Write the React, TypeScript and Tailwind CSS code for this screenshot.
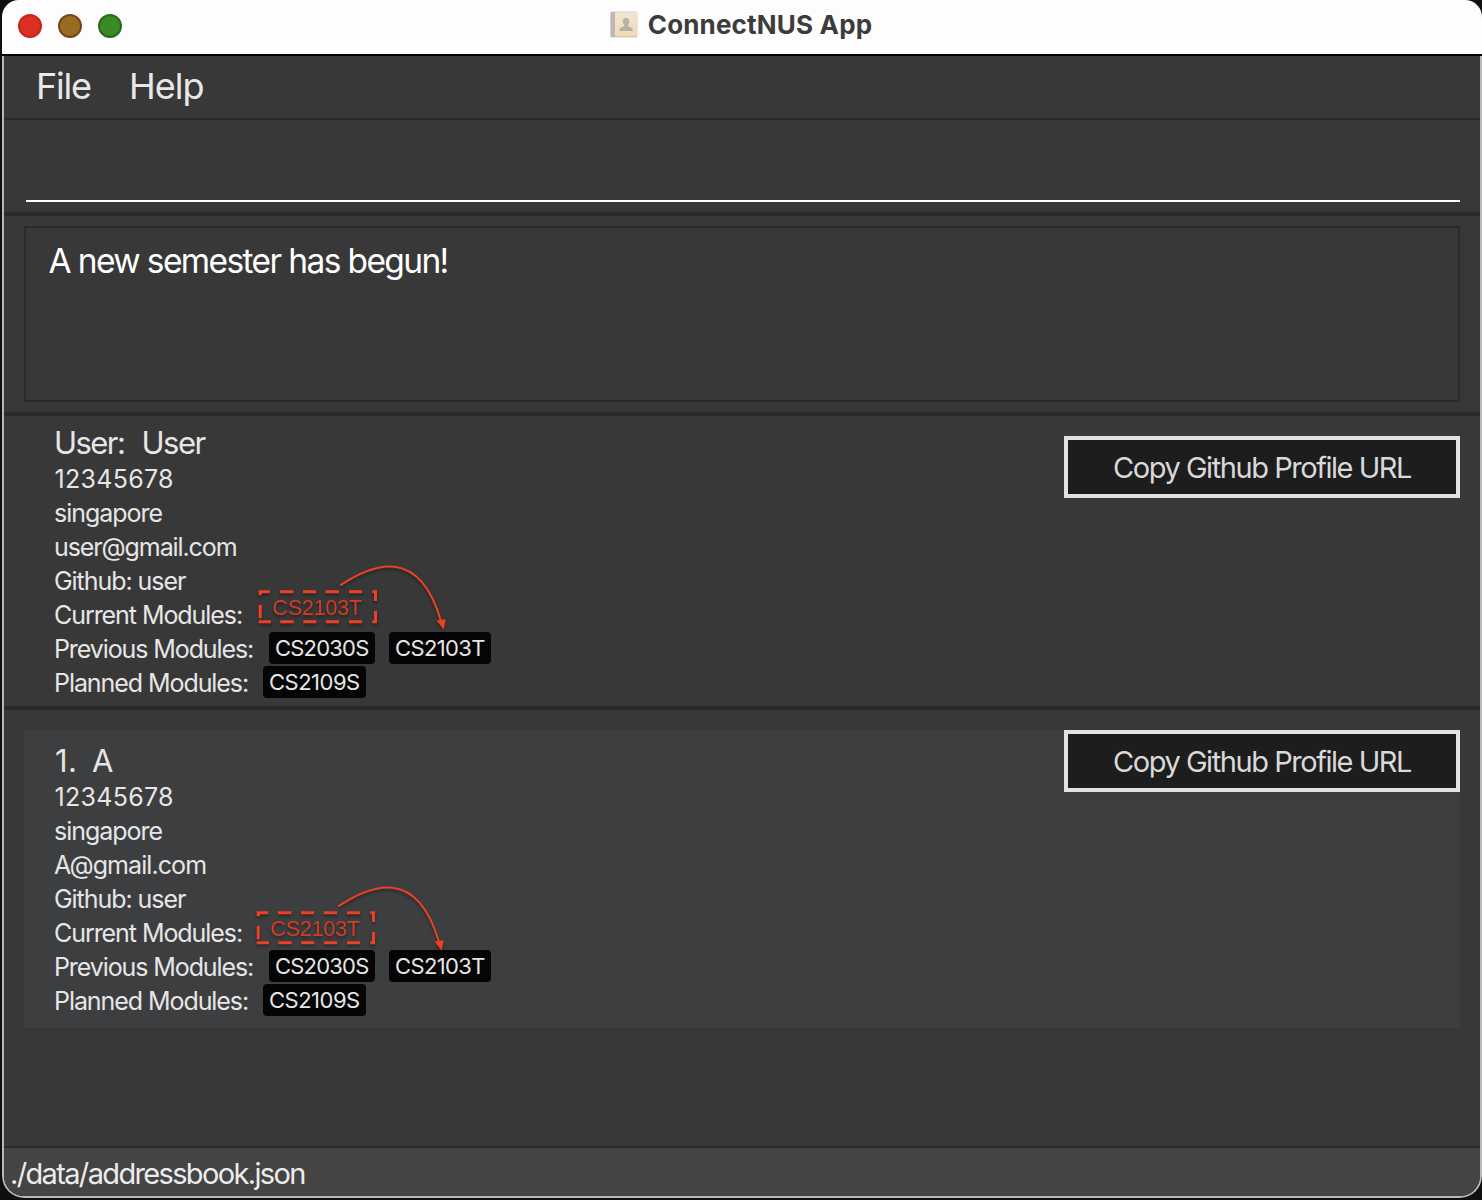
import type { ReactNode } from "react";

type Contact = {
  prefix: string;
  name: string;
  email: string;
  prefixClass: string;
  nameClass: string;
  emailClass: string;
};

const USER: Contact = {
  prefix: "User:",
  name: "User",
  email: "user@gmail.com",
  prefixClass: "w-[87.5px] tracking-[-1.55px]",
  nameClass: "tracking-[-1.5px]",
  emailClass: "tracking-[-1.1px]",
};

const FIRST: Contact = {
  prefix: "1.",
  name: "A",
  email: "A@gmail.com",
  prefixClass: "w-[38px] pl-px tracking-[0.3px]",
  nameClass: "",
  emailClass: "tracking-[-0.92px]",
};

function Tag({ className, children }: { className: string; children: ReactNode }) {
  return (
    <span className={`h-8 shrink-0 rounded-[4px] bg-[#050505] pl-[6px] text-[22px] leading-8 ${className}`}>
      {children}
    </span>
  );
}

function CopyButton() {
  return (
    <button className="flex h-[62px] w-[396px] shrink-0 items-center justify-center border-4 border-[#e2e2e2] bg-[#1d1d1d] pt-px text-[29px] leading-none tracking-[-1.45px] text-[#d9d9d9]">
      Copy Github Profile URL
    </button>
  );
}

/* Dashed box around the former module and the arrow to its new place. */
function MoveAnnotation({ className }: { className: string }) {
  return (
    <svg
      className={`pointer-events-none absolute overflow-visible ${className}`}
      width="240"
      height="80"
      viewBox="0 0 240 80"
      fill="none"
      style={{ filter: "drop-shadow(0 2px 1.5px rgba(0,0,0,0.4))" }}
    >
      <path
        stroke="#ee4023"
        strokeWidth="3"
        d="M8.7 31.7H20M30 31.7H43.3M53 31.7H66M75.7 31.7H89M99 31.7H112M122.3 31.7H127M8.7 61.7H21M30.3 61.7H43.7M53.3 61.7H66.3M76 61.7H89M99 61.7H112M122.3 61.7H127M10.2 30.2V35.3M10.2 45V58.3M125.5 30.2V41M125.5 51V63"
      />
      <path stroke="#ee4023" strokeWidth="2" d="M90.3 25.3C122 4 169 -15 191 61" />
      <path fill="#ee4023" d="M186.6 60.5L195.7 59.3L193.7 69.8Z" />
      <text x="22.6" y="54.6" fill="#d83b20" fontSize="21.4" letterSpacing="-0.15" className="font-['Liberation_Sans',sans-serif]">
        CS2103T
      </text>
    </svg>
  );
}

function Details({ contact, annotationClass }: { contact: Contact; annotationClass: string }) {
  return (
    <div className="relative flex flex-col text-[25px] leading-[34px] whitespace-nowrap text-[#e6e6e6]">
      <div className="flex h-[38px] text-[31px] leading-[38px]">
        <span className={contact.prefixClass}>{contact.prefix}</span>
        <span className={contact.nameClass}>{contact.name}</span>
      </div>
      <div className="pl-[0.5px] tracking-[0.3px]">12345678</div>
      <div className="tracking-[-1.02px]">singapore</div>
      <div className={contact.emailClass}>{contact.email}</div>
      <div className="tracking-[-1.05px]">Github: user</div>
      <div className="tracking-[-1.06px]">Current Modules:</div>
      <div className="flex h-[34px]">
        <span className="w-[215px] tracking-[-1.1px]">Previous Modules:</span>
        <Tag className="w-[106px] tracking-[-0.8px]">CS2030S</Tag>
        <Tag className="ml-[14px] w-[102px] tracking-[-0.62px]">CS2103T</Tag>
      </div>
      <div className="flex h-[34px]">
        <span className="w-[209px] tracking-[-1.07px]">Planned Modules:</span>
        <Tag className="w-[103px] tracking-[-0.51px]">CS2109S</Tag>
      </div>
      <MoveAnnotation className={annotationClass} />
    </div>
  );
}

function TitleBar() {
  return (
    <header className="relative flex h-14 shrink-0 items-center justify-center border-b-2 border-black bg-[#fdfdfd] pb-1">
      <div className="absolute top-[14px] left-4 flex gap-4">
        <span className="size-6 rounded-full border-2 border-[#c2281d] bg-[#dc3023]" />
        <span className="size-6 rounded-full border-2 border-[#74471a] bg-[#986b22]" />
        <span className="size-6 rounded-full border-2 border-[#2b6a1c] bg-[#3b8a26]" />
      </div>
      <svg className="mr-[10px] -ml-[2px]" width="28" height="28" viewBox="0 0 28 28">
        <defs>
          <linearGradient id="cover" x1="0" y1="0" x2="0" y2="1">
            <stop offset="0" stopColor="#f1e6d3" />
            <stop offset="1" stopColor="#efd9b2" />
          </linearGradient>
        </defs>
        <rect x="0.5" y="0.5" width="27" height="26" rx="1.5" fill="#dcd3c6" />
        <rect x="5" y="1.5" width="22" height="23.5" fill="url(#cover)" />
        <rect x="0.5" y="1" width="4.5" height="25" rx="1" fill="#bdb9b8" />
        <path d="M5 25.5H27" stroke="#d5c6ab" />
        <path
          fill="#b9b1a3"
          d="M16 7c2.2 0 3.3 1.5 3.3 3.4 0 1.4-.6 2.5-1.4 3.3v1.6c1.7.8 4.2 1.2 4.7 3 .2.7.2 1.3.2 1.6H9.2c0-.3 0-.9.2-1.6.5-1.8 3-2.2 4.7-3v-1.6c-.8-.8-1.4-1.9-1.4-3.3C12.7 8.5 13.8 7 16 7z"
        />
      </svg>
      <h1 className="text-[26px] leading-8 font-bold tracking-[0.17px] text-[#3c3c3c]">ConnectNUS App</h1>
    </header>
  );
}

export default function App() {
  return (
    <div className="h-[1200px] w-[1482px] overflow-hidden bg-[#0f0f12] pl-[2px] font-[Inter,sans-serif]">
      <div className="relative flex h-[1198px] flex-col overflow-hidden rounded-t-[17px] rounded-b-[22px] bg-[#383838]">
        <TitleBar />
        <div className="flex min-h-0 flex-1 flex-col overflow-hidden rounded-b-[22px] border-2 border-t-0 border-[#b9b9b9]">
          <nav className="flex h-16 shrink-0 border-b-2 border-[#2a2a2a] pl-8 text-[36px] leading-[60px] text-[#e8e8e8]">
            <span className="w-[93px] tracking-[-1.2px]">File</span>
            <span className="tracking-[-1px]">Help</span>
          </nav>
          <div className="h-24 shrink-0 border-b-4 border-[#2a2a2a] pr-5 pl-[22px]">
            <div className="h-[82px] border-b-2 border-white" />
          </div>
          <div className="h-[200px] shrink-0 border-b-4 border-[#2a2a2a] px-5 pt-[10px]">
            <div className="h-[176px] border-2 border-[#2b2b2b] pt-[13px] pl-[22.5px] text-[33.5px] leading-10 tracking-[-1.62px] text-white">
              A new semester has begun!
            </div>
          </div>
          <section className="flex h-[294px] shrink-0 justify-between border-b-4 border-[#2a2a2a] pt-2 pr-5 pl-[50px]">
            <Details contact={USER} annotationClass="left-[196px] top-[136px]" />
            <div className="pt-3">
              <CopyButton />
            </div>
          </section>
          <main className="min-h-0 flex-1 px-5 pt-5">
            <article className="flex h-[298px] justify-between bg-[#3d3e40] pl-[30px]">
              <div className="pt-3">
                <Details contact={FIRST} annotationClass="left-[194px] top-[139px]" />
              </div>
              <CopyButton />
            </article>
          </main>
          <footer className="h-[50px] shrink-0 border-t-2 border-[#2a2a2a] bg-[#444444] pt-[6px] pl-[6px] text-[29px] leading-10 tracking-[-1.65px] text-[#ececec]">
            ./data/addressbook.json
          </footer>
        </div>
      </div>
    </div>
  );
}
